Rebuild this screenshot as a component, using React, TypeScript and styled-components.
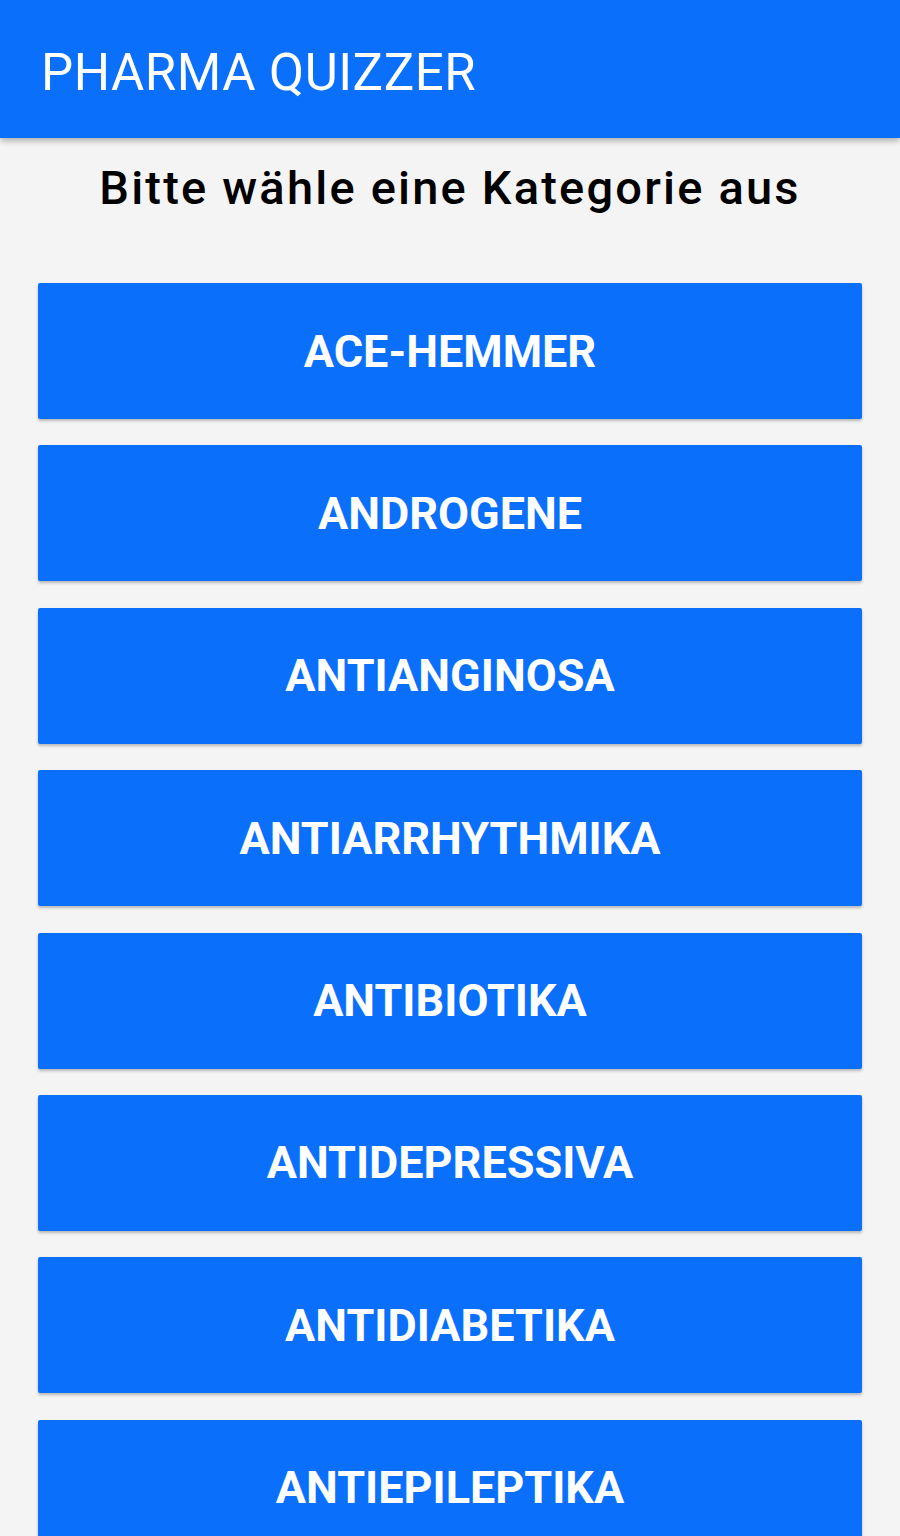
import React from 'react'
import styled, { createGlobalStyle } from 'styled-components'

const BLUE = '#0a6ffb'

const GlobalStyle = createGlobalStyle`
  html, body {
    margin: 0;
    padding: 0;
    background: #f4f4f4;
    font-family: Roboto, 'Liberation Sans', sans-serif;
  }
`

const Page = styled.div`
  width: 900px;
  height: 1536px;
  overflow: hidden;
  background: #f4f4f4;
`

const Header = styled.header`
  height: 138px;
  background: ${BLUE};
  display: flex;
  align-items: center;
  padding: 0 41px;
  box-sizing: border-box;
  box-shadow: 0 3px 6px rgba(0, 0, 0, 0.28);
  position: relative;
  z-index: 1;
`

const HeaderTitle = styled.h1`
  margin: 0;
  color: white;
  font-size: 51px;
  font-weight: 400;
  letter-spacing: 0.5px;
  margin-top: 6px;
`

const Prompt = styled.h2`
  margin: 0;
  text-align: center;
  font-size: 47px;
  font-weight: 500;
  letter-spacing: 2.2px;
  color: #000;
  padding-top: 23px;
  line-height: 54px;
`

const List = styled.div`
  display: flex;
  flex-direction: column;
  gap: 26.4px;
  padding: 68px 38px 0 38px;
`

const CategoryButton = styled.button`
  height: 136px;
  width: 100%;
  border: none;
  border-radius: 2px;
  background: ${BLUE};
  color: white;
  font-family: Roboto, 'Liberation Sans', sans-serif;
  font-size: 45px;
  font-weight: 700;
  text-transform: uppercase;
  box-shadow: 0 2px 3px rgba(0, 0, 0, 0.25);
  flex-shrink: 0;
  cursor: pointer;
`

const categories = [
  'ACE-Hemmer',
  'Androgene',
  'Antianginosa',
  'Antiarrhythmika',
  'Antibiotika',
  'Antidepressiva',
  'Antidiabetika',
  'Antiepileptika',
]

export default function App() {
  return (
    <Page>
      <GlobalStyle />
      <Header>
        <HeaderTitle>PHARMA QUIZZER</HeaderTitle>
      </Header>
      <Prompt>Bitte wähle eine Kategorie aus</Prompt>
      <List>
        {categories.map((c) => (
          <CategoryButton key={c}>{c}</CategoryButton>
        ))}
      </List>
    </Page>
  )
}
